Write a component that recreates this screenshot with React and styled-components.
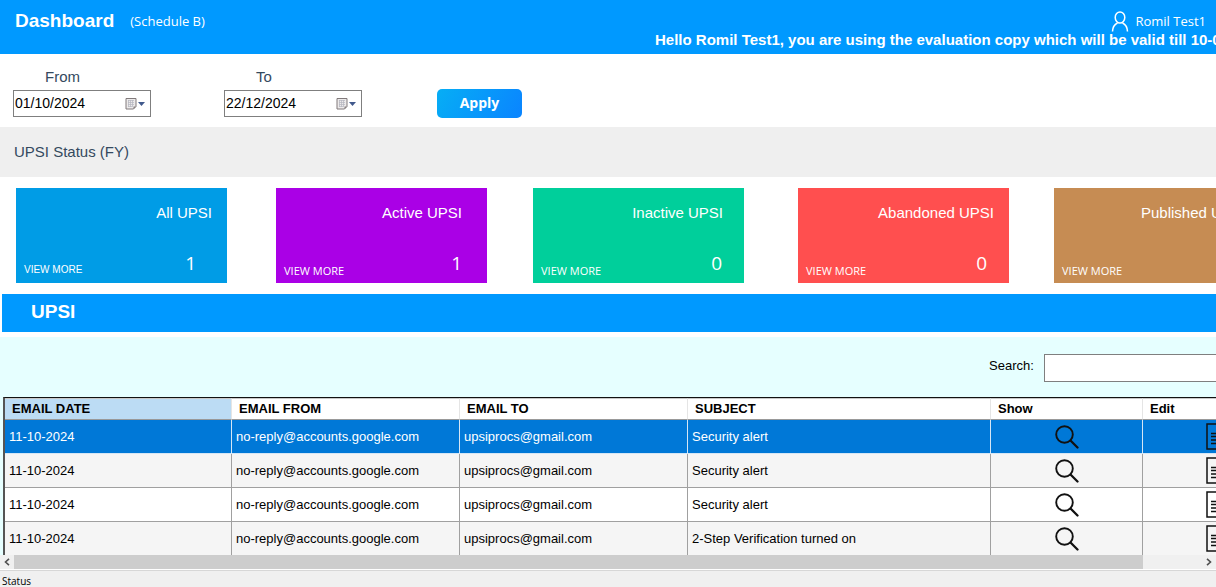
import React, { useState } from "react";
import styled, { createGlobalStyle } from "styled-components";

const sans = `"Liberation Sans", Arial, sans-serif`;
const humanist = `"Open Sans", "Noto Sans", sans-serif`;

const GlobalStyle = createGlobalStyle`
  *, *::before, *::after { box-sizing: border-box; }
  body { margin: 0; background: #fff; font-family: ${sans}; color: #000; }
  button, input { font: inherit; color: inherit; margin: 0; }
  h1, h2, p { margin: 0; }
`;

const Page = styled.div`
  display: flex;
  flex-direction: column;
  height: 100vh;
  overflow: hidden;
`;

const Header = styled.header`
  flex: none;
  background: #0099ff;
  color: #fff;
  padding: 10px 0 6px;
  overflow: hidden;
`;

const HeaderRow = styled.div`
  display: flex;
  align-items: center;
  height: 22px;
  padding: 0 10px 0 15px;
`;

const PageTitle = styled.h1`
  font-size: 19px;
  line-height: 22px;
  font-weight: bold;
`;

const Schedule = styled.span`
  margin-left: 16px;
  font: 13px/22px ${humanist};
`;

const User = styled.div`
  display: flex;
  align-items: center;
  gap: 6px;
  margin-left: auto;
  font: 13px/22px ${humanist};
`;

const Notice = styled.p`
  padding-left: 655px;
  font-size: 15px;
  line-height: 16px;
  font-weight: bold;
  white-space: nowrap;
`;

const Filters = styled.form`
  flex: none;
  display: flex;
  align-items: flex-end;
  padding: 14px 13px 10px;
`;

const Field = styled.div`
  display: flex;
  flex-direction: column;
  width: 138px;
  margin-right: 73px;
`;

const FieldLabel = styled.label`
  padding-left: 32px;
  font-size: 15px;
  line-height: 18px;
  margin-bottom: 4px;
  color: #34495e;
`;

const DateBox = styled.div`
  display: flex;
  align-items: center;
  height: 27px;
  border: 1px solid #7f7f7f;
  background: #fff;
`;

const DateInput = styled.input`
  flex: 1;
  min-width: 0;
  height: 25px;
  padding: 0 1px;
  border: 0;
  outline: 0;
  background: none;
  font: 14px/25px ${sans};
`;

const PickerButton = styled.button`
  display: flex;
  padding: 0 5px 0 0;
  border: 0;
  background: none;
`;

const ApplyButton = styled.button`
  width: 85px;
  height: 29px;
  padding: 0 0 1px;
  margin: 0 0 -1px 2px;
  border: 0;
  border-radius: 5px;
  background: linear-gradient(120deg, #06aef5, #0a84ff);
  color: #fff;
  font: bold 14px/20px ${humanist};
`;

const Band = styled.div`
  flex: none;
  background: #efefef;
  color: #34495e;
  padding: 0 14px;
  font-size: 15px;
  line-height: 50px;
`;

const Cards = styled.section`
  flex: none;
  display: grid;
  grid-template-columns: 260px 257px 265px 256px 211px;
  padding: 11px 0 11px 16px;
  overflow: hidden;
`;

const Card = styled.article`
  display: flex;
  flex-direction: column;
  justify-content: space-between;
  width: 211px;
  height: 95px;
  padding: 16px 0 3px;
  background: ${(p) => p.$color};
  color: #fff;
`;

const CardTitle = styled.h2`
  padding-right: ${(p) => p.$inset}px;
  text-align: right;
  font-size: 15px;
  line-height: 18px;
  font-weight: normal;
`;

const CardFoot = styled.div`
  display: flex;
  justify-content: space-between;
  align-items: flex-end;
  padding: 0 ${(p) => p.$inset}px 0 8px;
`;

const ViewMore = styled.a`
  font: ${(p) => (p.$plain ? `10px/20px ${sans}` : `11px/18px ${humanist}`)};
  color: inherit;
  text-decoration: none;
`;

const Count = styled.span`
  font: 19px/34px ${humanist};
`;

const SectionBar = styled.h2`
  flex: none;
  margin-left: 2px;
  padding: 0 29px 3px;
  background: #0099ff;
  color: #fff;
  font-size: 19px;
  line-height: 35px;
  font-weight: bold;
`;

const ListPanel = styled.section`
  flex: 1;
  min-height: 0;
  display: flex;
  flex-direction: column;
  margin-top: 5px;
  background: #e6ffff;
  overflow: hidden;
`;

const SearchRow = styled.div`
  flex: none;
  display: flex;
  padding: 17px 0 15px 989px;
`;

const SearchLabel = styled.label`
  flex: none;
  width: 55px;
  font-size: 13px;
  line-height: 24px;
`;

const SearchInput = styled.input`
  flex: none;
  width: 240px;
  height: 28px;
  padding: 0 4px;
  border: 1px solid #7f7f7f;
  background: #fff;
  font-size: 13px;
`;

const TableFrame = styled.div`
  flex: 1;
  min-height: 0;
  margin-left: 3px;
  border-top: 1px solid #111;
  border-left: 2px solid #555;
  overflow: hidden;
`;

const Table = styled.table`
  width: 1290px;
  table-layout: fixed;
  border-collapse: separate;
  border-spacing: 0;
  font-size: 13px;
  text-align: left;
`;

const HeadCell = styled.th`
  height: 22px;
  padding: 0 7px;
  border-top: 1px solid #c8c8c8;
  border-right: 1px solid #e5e5e5;
  border-bottom: 1px solid #999;
  background: ${(p) => (p.$sorted ? "#bcdcf4" : "#fff")};
  font-weight: bold;
  line-height: 18px;
`;

const Row = styled.tr`
  background: #fff;
  &:nth-child(even) { background: #f5f5f5; }
  &[aria-selected="true"] { background: #0078d7; color: #fff; }
`;

const Cell = styled.td`
  height: 34px;
  padding: 0 4px;
  border-right: 1px solid #a0a0a0;
  border-bottom: 1px solid #a0a0a0;
  line-height: 18px;
  text-align: ${(p) => (p.$center ? "center" : "left")};
  ${Row}[aria-selected="true"] & { border-color: #d5e6f5; }
`;

const IconButton = styled.button`
  display: inline-flex;
  padding: 0;
  border: 0;
  background: none;
  color: #111;
  vertical-align: middle;
`;

const ScrollTrack = styled.div`
  flex: none;
  display: flex;
  align-items: center;
  height: 14px;
  background: #f0f0f0;
`;

const ScrollArrow = styled.button`
  flex: none;
  display: flex;
  justify-content: center;
  width: 14px;
  padding: 0;
  border: 0;
  background: none;
  color: #505050;
`;

const ScrollRail = styled.div`
  flex: 1;
  padding-right: 59px;
`;

const ScrollThumb = styled.div`
  height: 14px;
  background: #cdcdcd;
`;

const StatusBar = styled.footer`
  flex: none;
  height: 18px;
  padding: 4px 2px 0;
  border-top: 1px solid #fff;
  background: #f0f0f0;
  box-shadow: inset 0 1px #d7d7d7;
  font: 10px/14px ${humanist};
`;

const CalendarIcon = () => (
  <svg width="20" height="14" viewBox="0 0 20 14" aria-hidden="true">
    <path d="M1 1.500h10v8l-2.500 2.500h-7.500z" fill="#eceaea" stroke="#80797a" strokeLinejoin="round" />
    <path d="M3 3.500h6M3 5.500h6M3 7.500h6M3 9.500h4M3.500 3v7M5.500 3v7M7.500 3v7" stroke="#b5b4bf" strokeWidth=".7" />
    <path d="M8.500 12v-2.500h2.500z" fill="#80797a" />
    <path d="M13 5h7l-3.500 4z" fill="#41598c" />
  </svg>
);

const UserIcon = () => (
  <svg width="18" height="22" viewBox="0 0 18 22" fill="none" stroke="#fff" strokeWidth="1.500" aria-hidden="true">
    <ellipse cx="9" cy="7.500" rx="4.800" ry="5.500" />
    <path d="M1.500 21.500c.2-4.600 2.200-7.200 5-8.500M16.500 21.500c-.2-4.600-2.200-7.200-5-8.500" />
  </svg>
);

const SearchIcon = () => (
  <svg width="24" height="24" viewBox="0 0 24 24" fill="none" stroke="currentColor" aria-hidden="true">
    <circle cx="9.500" cy="9.500" r="8.300" strokeWidth="1.900" />
    <path d="M15.500 15.500l7 7" strokeWidth="2.300" strokeLinecap="round" />
  </svg>
);

const EditIcon = () => (
  <svg width="26" height="27" viewBox="0 0 26 27" fill="none" stroke="currentColor" aria-hidden="true">
    <path d="M21 11V1H1v25h20v-4" strokeWidth="1.500" />
    <path d="M5 10.500h11M5 13.500h11M5 17h8M5 20.500h7" strokeWidth="1.300" />
    <path d="M14 20l1-3 8-8 2 2-8 8z" strokeWidth="1.200" />
  </svg>
);

const Chevron = ({ right }) => (
  <svg width="6" height="8" viewBox="0 0 6 8" fill="none" stroke="currentColor" strokeWidth="1.600" aria-hidden="true">
    <path d={right ? "M1 .8L4.500 4 1 7.200" : "M5 .8L1.500 4 5 7.200"} />
  </svg>
);

const cards = [
  { title: "All UPSI", count: 1, color: "#009ce6", inset: 15, countInset: 31, plain: true },
  { title: "Active UPSI", count: 1, color: "#aa00e6", inset: 25, countInset: 25 },
  { title: "Inactive UPSI", count: 0, color: "#00cf9b", inset: 21, countInset: 22 },
  { title: "Abandoned UPSI", count: 0, color: "#ff4f4f", inset: 15, countInset: 22 },
  { title: "Published UPSI", count: 0, color: "#c68c53", inset: 19, countInset: 22 },
];

const columns = [
  ["EMAIL DATE", 227],
  ["EMAIL FROM", 228],
  ["EMAIL TO", 228],
  ["SUBJECT", 303],
  ["Show", 152],
  ["Edit", 152],
];

const subjects = ["Security alert", "Security alert", "Security alert", "2-Step Verification turned on"];

function DateField({ id, label, initial }) {
  const [value, setValue] = useState(initial);
  return (
    <Field>
      <FieldLabel htmlFor={id}>{label}</FieldLabel>
      <DateBox>
        <DateInput id={id} value={value} onChange={(e) => setValue(e.target.value)} />
        <PickerButton type="button" aria-label={`Choose ${label} date`}>
          <CalendarIcon />
        </PickerButton>
      </DateBox>
    </Field>
  );
}

export default function App() {
  const [selected, setSelected] = useState(0);
  return (
    <Page>
      <GlobalStyle />
      <Header>
        <HeaderRow>
          <PageTitle>Dashboard</PageTitle>
          <Schedule>(Schedule B)</Schedule>
          <User>
            <UserIcon />
            Romil Test1
          </User>
        </HeaderRow>
        <Notice>Hello Romil Test1, you are using the evaluation copy which will be valid till 10-08</Notice>
      </Header>

      <Filters onSubmit={(e) => e.preventDefault()}>
        <DateField id="from" label="From" initial="01/10/2024" />
        <DateField id="to" label="To" initial="22/12/2024" />
        <ApplyButton type="submit">Apply</ApplyButton>
      </Filters>

      <Band>UPSI Status (FY)</Band>

      <Cards>
        {cards.map((c) => (
          <Card key={c.title} $color={c.color}>
            <CardTitle $inset={c.inset}>{c.title}</CardTitle>
            <CardFoot $inset={c.countInset}>
              <ViewMore href="#upsi" $plain={c.plain}>VIEW MORE</ViewMore>
              <Count>{c.count}</Count>
            </CardFoot>
          </Card>
        ))}
      </Cards>

      <SectionBar id="upsi">UPSI</SectionBar>

      <ListPanel>
        <SearchRow>
          <SearchLabel htmlFor="search">Search:</SearchLabel>
          <SearchInput id="search" type="text" />
        </SearchRow>
        <TableFrame>
          <Table>
            <colgroup>
              {columns.map(([name, width]) => (
                <col key={name} width={width} />
              ))}
            </colgroup>
            <thead>
              <tr>
                {columns.map(([name], i) => (
                  <HeadCell key={name} scope="col" $sorted={i === 0}>{name}</HeadCell>
                ))}
              </tr>
            </thead>
            <tbody>
              {subjects.map((subject, i) => (
                <Row key={i} aria-selected={i === selected} onClick={() => setSelected(i)}>
                  <Cell>11-10-2024</Cell>
                  <Cell>no-reply@accounts.google.com</Cell>
                  <Cell>upsiprocs@gmail.com</Cell>
                  <Cell>{subject}</Cell>
                  <Cell $center>
                    <IconButton type="button" aria-label="Show"><SearchIcon /></IconButton>
                  </Cell>
                  <Cell $center>
                    <IconButton type="button" aria-label="Edit"><EditIcon /></IconButton>
                  </Cell>
                </Row>
              ))}
            </tbody>
          </Table>
        </TableFrame>
        <ScrollTrack>
          <ScrollArrow type="button" aria-label="Scroll left"><Chevron /></ScrollArrow>
          <ScrollRail><ScrollThumb /></ScrollRail>
          <ScrollArrow type="button" aria-label="Scroll right"><Chevron right /></ScrollArrow>
        </ScrollTrack>
      </ListPanel>
      <StatusBar>Status</StatusBar>
    </Page>
  );
}
